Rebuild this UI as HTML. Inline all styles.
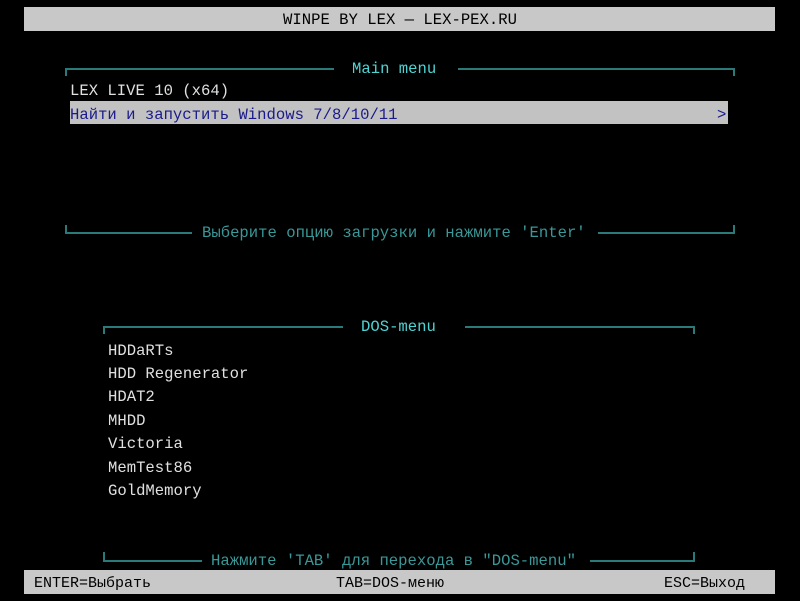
<!DOCTYPE html>
<html><head><meta charset="utf-8"><style>
body{margin:0;width:800px;height:601px;background:#000;position:relative;overflow:hidden;font-family:"Liberation Mono","DejaVu Sans Mono",monospace;font-size:15.6px}
.a{position:absolute;white-space:pre;line-height:18px}
.bar{position:absolute;background:#c8c8c8}
.h{position:absolute;height:2px;background:#2a7a7a}
.v{position:absolute;width:2px;background:#2a7a7a}
.t{color:#4fd4d4}
.d{color:#3a9898}
.w{color:#e0e0e0}
</style></head><body>
<div class="bar" style="left:24px;top:7px;width:751px;height:24px"></div>
<div class="a" style="left:0;width:800px;text-align:center;top:11px;color:#000">WINPE BY LEX — LEX-PEX.RU</div>

<div class="h" style="left:65px;top:68px;width:269px"></div>
<div class="h" style="left:458px;top:68px;width:277px"></div>
<div class="v" style="left:65px;top:68px;height:8px"></div>
<div class="v" style="left:733px;top:68px;height:8px"></div>
<div class="a t" style="left:352px;top:60px">Main menu</div>
<div class="a w" style="left:70px;top:82px">LEX LIVE 10 (x64)</div>
<div class="bar" style="left:70px;top:101px;width:658px;height:23px;background:#c2c2c2"></div>
<div class="a" style="left:70px;top:106px;color:#1a1a8a">Найти и запустить Windows 7/8/10/11</div>
<div class="a" style="left:717px;top:106px;color:#1a1a8a">&gt;</div>

<div class="h" style="left:65px;top:232px;width:127px"></div>
<div class="h" style="left:598px;top:232px;width:137px"></div>
<div class="v" style="left:65px;top:225px;height:9px"></div>
<div class="v" style="left:733px;top:225px;height:9px"></div>
<div class="a d" style="left:202px;top:224px">Выберите опцию загрузки и нажмите 'Enter'</div>

<div class="h" style="left:103px;top:326px;width:240px"></div>
<div class="h" style="left:465px;top:326px;width:230px"></div>
<div class="v" style="left:103px;top:326px;height:8px"></div>
<div class="v" style="left:693px;top:326px;height:8px"></div>
<div class="a t" style="left:361px;top:318px">DOS-menu</div>
<div class="a w" style="left:108px;top:342px">HDDaRTs</div>
<div class="a w" style="left:108px;top:365px">HDD Regenerator</div>
<div class="a w" style="left:108px;top:388px">HDAT2</div>
<div class="a w" style="left:108px;top:412px">MHDD</div>
<div class="a w" style="left:108px;top:435px">Victoria</div>
<div class="a w" style="left:108px;top:459px">MemTest86</div>
<div class="a w" style="left:108px;top:482px">GoldMemory</div>

<div class="h" style="left:103px;top:560px;width:99px"></div>
<div class="h" style="left:590px;top:560px;width:105px"></div>
<div class="v" style="left:103px;top:552px;height:10px"></div>
<div class="v" style="left:693px;top:552px;height:10px"></div>
<div class="a d" style="left:211px;top:552px">Нажмите 'TAB' для перехода в "DOS-menu"</div>

<div class="bar" style="left:24px;top:570px;width:751px;height:24px"></div>
<div class="a" style="left:34px;top:575px;color:#000;font-size:15px">ENTER=Выбрать</div>
<div class="a" style="left:336px;top:575px;color:#000;font-size:15px">TAB=DOS-меню</div>
<div class="a" style="left:664px;top:575px;color:#000;font-size:15px">ESC=Выход</div>
</body></html>
